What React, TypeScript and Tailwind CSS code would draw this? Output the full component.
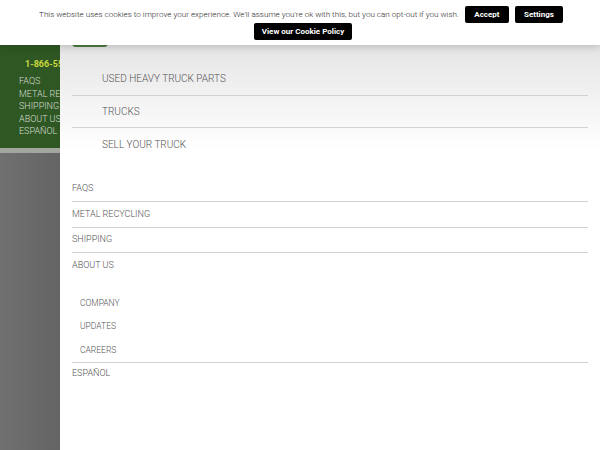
import React from "react";

const mainLinks = ["USED HEAVY TRUCK PARTS", "TRUCKS", "SELL YOUR TRUCK"];
const infoLinks = ["FAQS", "METAL RECYCLING", "SHIPPING", "ABOUT US"];
const aboutLinks = ["COMPANY", "UPDATES", "CAREERS"];
const sideLinks = ["FAQS", "METAL RECYCLING", "SHIPPING", "ABOUT US", "ESPAÑOL"];

const CookieBar: React.FC = () => (
    <div className="absolute top-0 left-0 right-0 z-10 h-[45px] bg-white shadow-[0_2px_8px_rgba(0,0,0,0.18)] flex flex-col items-center pt-[6px]">
        <div className="flex items-center gap-[6px] ml-[2px]">
            <span className="text-[8.1px] text-[#2b2b2b] font-light">
                This website uses cookies to improve your experience. We'll assume you're ok with this, but you can opt-out if you wish.
            </span>
            <button className="h-[17px] w-[44px] bg-black text-white text-[8px] font-bold rounded-[2px]">Accept</button>
            <button className="h-[17px] w-[48px] bg-black text-white text-[8px] font-bold rounded-[2px]">Settings</button>
        </div>
        <button className="ml-[6px] h-[17px] w-[98px] bg-black text-white text-[8px] font-bold rounded-[2px]">
            View our Cookie Policy
        </button>
    </div>
);

export default function App() {
    return (
        <div className="relative h-[450px] w-[600px] overflow-hidden flex font-['Roboto',sans-serif]">
            <CookieBar />

            {/* left strip of the page behind the menu */}
            <div className="w-[60px] shrink-0 flex flex-col overflow-hidden whitespace-nowrap">
                <div className="h-[148px] bg-[#2e5723] pt-[59px]">
                    <div className="pl-[25px] text-[9px] font-bold text-[#c9d63f] leading-[11px]">1-866-555-0000</div>
                    <div className="pl-[19px] mt-[5px] flex flex-col text-[9px] font-light leading-[12.5px] text-[#d6dcd2]">
                        {sideLinks.map((l) => (
                            <span key={l}>{l}</span>
                        ))}
                    </div>
                </div>
                <div className="h-[5px] bg-[#a3a69e]" />
                <div className="flex-1 bg-gradient-to-r from-[#707070] to-[#646464]" />
            </div>

            {/* slide-out menu */}
            <div className="flex-1 px-[12px] bg-[linear-gradient(to_bottom,#e4e4e4_40px,#ffffff_150px)]">
                <div className="mt-[38px] h-[9px] w-[36px] rounded-b-[4px] bg-[#4c7d3c]" />

                <ul className="mt-[16px]">
                    {mainLinks.map((l, i) => (
                        <li
                            key={l}
                            className={
                                "h-[32.5px] pl-[30px] flex items-center text-[10px] font-light text-[#555] " +
                                (i < mainLinks.length - 1 ? "border-b border-[#d2d2d2]" : "")
                            }
                        >
                            {l}
                        </li>
                    ))}
                </ul>

                <ul className="mt-[16px]">
                    {infoLinks.map((l, i) => (
                        <li
                            key={l}
                            className={
                                "h-[25.5px] flex items-center text-[9px] font-light text-[#555] " +
                                (i < infoLinks.length - 1 ? "border-b border-[#d2d2d2]" : "")
                            }
                        >
                            {l}
                        </li>
                    ))}
                </ul>

                <ul className="pt-[13px] border-b border-[#d2d2d2]">
                    {aboutLinks.map((l) => (
                        <li key={l} className="h-[23.5px] pl-[8px] flex items-center text-[8.5px] font-light text-[#555]">
                            {l}
                        </li>
                    ))}
                </ul>

                <div className="h-[22px] flex items-center text-[9px] font-light text-[#555]">ESPAÑOL</div>
            </div>
        </div>
    );
}
